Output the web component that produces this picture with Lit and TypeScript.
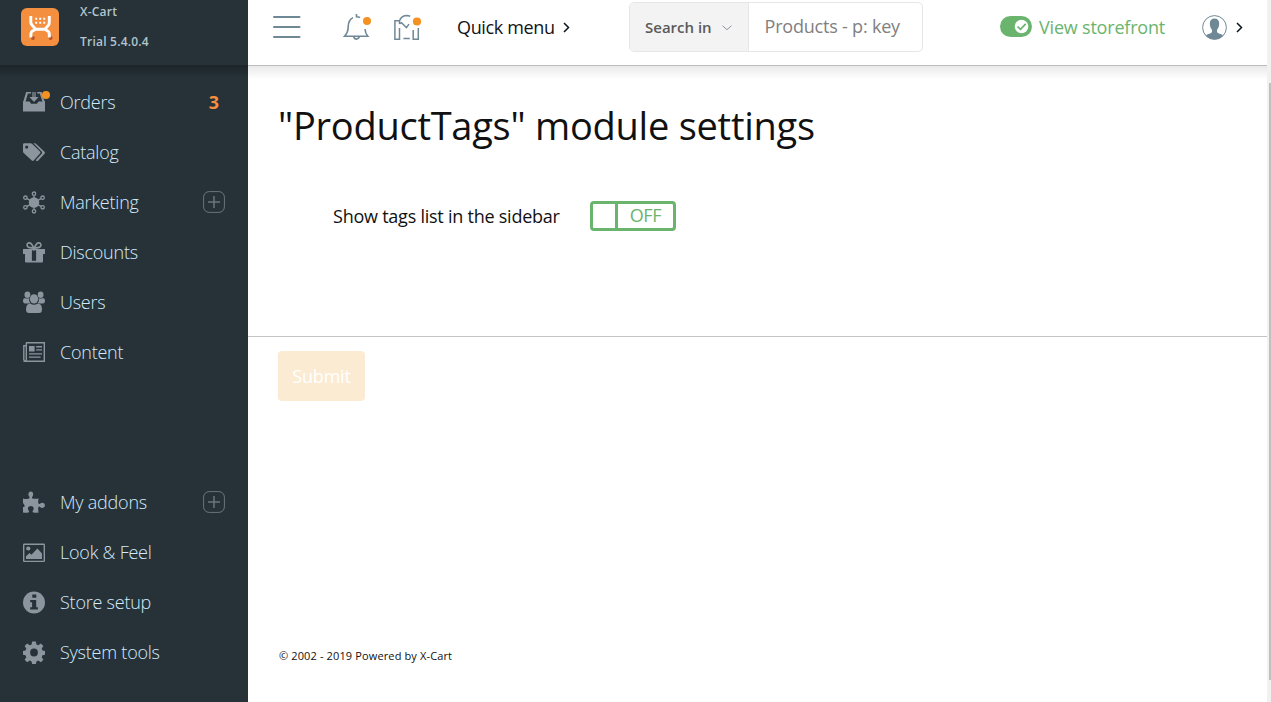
import { LitElement, html, css, svg } from "lit";
import { customElement } from "lit/decorators.js";

const icons: Record<string, unknown> = {
  orders: svg`<path d="M0 10.500h6.500l1.600 2.200h5.800l1.600-2.200H22V20.500H0Z"/><path d="M0 11.500 3.200 1H8v1.600H4.900L2.300 11.500ZM14.200 1h4.400L22 11.500h-2.300L16.700 2.600h-2.500Z"/><path d="M9.400 1h1.200v5.500H9.400Zm2 0h1.200v5.500h-1.200ZM6.400 6h9.200L11 10.900Z"/>`,
  catalog: svg`<path fill-rule="evenodd" d="M0 3.600Q0 2.300 1.300 2.300H7.600q1 0 1.700.7l7.700 7.600q1 1 0 2l-6.300 7q-.9.9-1.900 0L.7 12Q0 11.300 0 10.300ZM3.700 4.500a1.600 1.600 0 1 0 0 3.200 1.600 1.600 0 0 0 0-3.200Z"/><path d="M10.400 2.300h1.400q.8 0 1.400.6l8.300 7.900q.9.900 0 1.900l-6.500 7.100q-.9.800-1.700 0l-.6-.6 6-6.500q.9-1.100-.1-2.100Z"/>`,
  marketing: svg`<circle cx="11" cy="11.500" r="5.200"/><g fill="none" stroke="currentColor" stroke-width="1.300"><circle cx="11" cy="2.700" r="1.700"/><circle cx="11" cy="20.300" r="1.700"/><circle cx="2.400" cy="6.700" r="1.700"/><circle cx="19.600" cy="6.700" r="1.700"/><circle cx="2.400" cy="16.300" r="1.700"/><circle cx="19.600" cy="16.300" r="1.700"/><path d="M11 4.500v14M4 7.600l14 7.800M18 7.600 4 15.400"/></g>`,
  discounts: svg`<path d="M0 8h22v5h-2v7.500q0 1-1 1H3q-1 0-1-1V13H0Z"/><path d="M8.900 9.200h4.200v10.600H8.900Z" fill="#263238"/><path d="M9.900 8h2.200v1.500H9.900Z"/><path d="M10.700 7.200C9 2.600 7.500 1.900 6.300 1.900 3.200 1.900 3.300 6 6.700 6.600q2 .4 4 .6Zm.6 0C13 2.600 14.500 1.900 15.700 1.900 18.800 1.900 18.700 6 15.300 6.600q-2 .4-4 .6Z" fill="none" stroke="currentColor" stroke-width="1.600"/>`,
  users: svg`<ellipse cx="4.400" cy="3.700" rx="2.900" ry="3.200"/><ellipse cx="17.600" cy="3.700" rx="2.900" ry="3.200"/><path d="M0 9.600q0-2.500 2-2.500 2.300 1 4.300 0-.9 3.300 1.200 5.400H2.100Q0 12.500 0 9.600Zm22 0q0-2.500-2-2.500-2.300 1-4.300 0 .9 3.300-1.200 5.400h5.400q2.100 0 2.100-2.900Z"/><ellipse cx="11" cy="7.900" rx="4.100" ry="4.700"/><path d="M3 18.500q0-5.500 3.500-5.800h1q3.500 2 7 0h1q3.500.3 3.500 5.800 0 3.500-3 3.500H6q-3 0-3-3.500Z"/>`,
  content: svg`<path fill="none" stroke="currentColor" stroke-width="1.400" d="M3 4.700H.8V18.600q0 1.600 1.700 1.600M3 1.700h18.300v18.500H2.300q1-.6 1-2V1.700"/><path d="M6 5h5.600v5.600H6Zm7.200 0H19v1.400h-5.800Zm0 3.200H19v1.400h-5.800ZM6 12.200h13v1.200H6Zm0 3.200h11.500v1.300H6Z"/>`,
  addons: svg`<path d="M0 7.500Q3 8.600 6 7.500q1-.5.300-1.700Q5.300 4.500 5.400 2.800 5.700.5 7.800.5t2.400 2.300q.1 1.700-.9 3-.7 1.200.3 1.700 2.700.6 6 0-.6 2.800-.3 4.600.6 1.400 1.700.6 1.200-1.100 2.500-1 2.500.3 2.500 2.600t-2.500 2.600q-1.300.1-2.500-1-1.200-.8-1.700.6-.3 2.200.3 5-3 .4-5.300.1-1.200-.4-.5-1.900 1.100-1.400.8-2.900-.5-1.800-2.800-1.800T5 16.800q-.3 1.500.8 2.900.7 1.500-.5 1.800-2.600.4-5.300 0v-5.500q1.600.4 1.600-1.100T0 12Z"/>`,
  look: svg`<path fill="none" stroke="currentColor" stroke-width="1.400" d="M1.300 3.300h19.400q.6 0 .6.700v15.700q0 .7-.6.700H1.300q-.6 0-.6-.7V4q0-.7.6-.7Z"/><circle cx="5.300" cy="7.500" r="2.100"/><path d="M3 17.900v-2.600l3.500-3.400 1.900 1.800 6-6.200 4.600 5v5.400Z"/>`,
  setup: svg`<circle cx="11" cy="11.500" r="11"/><path fill="#263238" d="M9.300 3.600h4v3.100h-4ZM7.200 9h6v7.200h1.700v2.300H7.200v-2.300h1.900v-4.900H7.200Z"/>`,
  system: svg`<path fill-rule="evenodd" d="M9.100.5h3.800l.5 2.900 1.900.8 2.500-1.700 2.600 2.600-1.700 2.500.8 1.900 2.500.5v3.800l-2.500.5-.8 1.900 1.700 2.500-2.600 2.600-2.500-1.700-1.900.8-.5 2.600H9.100l-.5-2.600-1.900-.8-2.500 1.700-2.600-2.600 1.700-2.500-.8-1.900L0 13.800V10l2.500-.5.800-1.900-1.700-2.500 2.600-2.600 2.500 1.700 1.900-.8ZM11 7.600a3.900 3.900 0 1 0 0 7.800 3.900 3.900 0 0 0 0-7.800Z"/>`,
};

interface Item { icon: string; label: string; plus?: boolean; count?: string }

const upper: Item[] = [
  { icon: "orders", label: "Orders", count: "3" },
  { icon: "catalog", label: "Catalog" },
  { icon: "marketing", label: "Marketing", plus: true },
  { icon: "discounts", label: "Discounts" },
  { icon: "users", label: "Users" },
  { icon: "content", label: "Content" },
];
const lower: Item[] = [
  { icon: "addons", label: "My addons", plus: true },
  { icon: "look", label: "Look & Feel" },
  { icon: "setup", label: "Store setup" },
  { icon: "system", label: "System tools" },
];

@customElement("app-sidebar")
class AppSidebar extends LitElement {
  static styles = css`
    :host { display: flex; flex-direction: column; width: 248px; height: 702px; background: #263238; flex: none; }
    .brand { display: flex; height: 65px; box-sizing: border-box; padding: 8px 0 0 21px; gap: 21px; flex: none; }
    .logo { width: 38px; height: 38px; flex: none; }
    .names { font-size: 12px; font-weight: 600; line-height: 30px; color: #b3c5cd; margin-top: -11px; letter-spacing: .22px; }
    .menu { display: flex; flex-direction: column; flex: 1; padding-top: 12px; background: linear-gradient(#1b2429, #263238 12px); }
    .item { display: flex; align-items: center; height: 50px; padding: 0 23px; color: #8c949d; }
    .icon { position: relative; display: flex; width: 22px; height: 23px; margin-right: 15px; }
    .icon svg { width: 22px; height: 23px; fill: currentColor; }
    .dot { position: absolute; left: 19px; top: 0; width: 8px; height: 8px; border-radius: 50%; background: #f39121; }
    .label { flex: 1; font-size: 18px; font-weight: 300; line-height: 24px; letter-spacing: -.23px; color: #d3ebfc; white-space: nowrap; }
    .count { font-size: 18px; font-weight: 700; color: #f98f3c; margin-right: 6px; }
    .plus { width: 22px; height: 22px; fill: none; stroke: #69757c; }
    .gap { height: 100px; }
  `;
  row(i: Item) {
    return html`<div class="item">
      <span class="icon"><svg viewBox="0 0 22 23">${icons[i.icon]}</svg>${i.count ? html`<span class="dot"></span>` : ""}</span>
      <span class="label">${i.label}</span>
      ${i.count ? html`<span class="count">${i.count}</span>` : ""}
      ${i.plus ? html`<svg class="plus" viewBox="0 0 22 22"><rect x=".6" y=".6" width="20.800" height="20.800" rx="5.500"/><path stroke-width="1.500" d="M5 11h12M11 5v12"/></svg>` : ""}
    </div>`;
  }
  render() {
    return html`
      <div class="brand">
        <svg class="logo" viewBox="0 0 38 38">
          <rect width="38" height="38" rx="6" fill="#f48f40"/>
          <circle cx="11.900" cy="30" r="1.900" fill="#b7532c"/><circle cx="29.600" cy="30" r="1.900" fill="#b7532c"/>
          <path d="M9.800 8v6.500q.2 2 2 3.500l3 3.300h9l3-3.300q1.500-1.500 1.500-3.500V8M9.900 29.500v-3.300q0-2.400 2-3.400l2.900-1.500M28.300 29.500v-3.300q0-2.400-2-3.400l-2.500-1.500" fill="none" stroke="#fff" stroke-width="2.900"/>
          <path d="M14.200 9.700h2v2h-2Zm4 0h2v2h-2Zm4 0h2v2h-2Zm-8 4h2v2h-2Zm4 0h2v2h-2Zm4 0h2v2h-2Z" fill="#fff"/>
        </svg>
        <div class="names"><div>X-Cart</div><div>Trial 5.4.0.4</div></div>
      </div>
      <nav class="menu">${upper.map((i) => this.row(i))}<div class="gap"></div>${lower.map((i) => this.row(i))}</nav>`;
  }
}

@customElement("app-header")
class AppHeader extends LitElement {
  static styles = css`
    :host { display: flex; height: 66px; box-sizing: border-box; border-bottom: 1px solid #bdbdbd; color: #0f1419; flex: none; }
    svg { display: block; flex: none; fill: none; stroke: #6f8896; }
    .burger { width: 28px; height: 24px; margin: 15px 42px 0 25px; }
    .bell { width: 28px; height: 28px; margin: 14px 23px 0 0; }
    .news { width: 28px; height: 28px; margin: 14px 35px 0 0; }
    .dot { fill: #f39121; stroke: none; }
    .quick { font-size: 18px; line-height: 24px; margin-top: 15px; width: 98px; letter-spacing: -.35px; white-space: nowrap; }
    .arrow { width: 7px; height: 11px; stroke: #0f1419; stroke-width: 1.500; margin: 22px 0 0 8px; }
    .search { display: flex; box-sizing: border-box; width: 294px; height: 50px; margin: 2px 0 0 59px; border: 1px solid #e6e6e6; border-radius: 5px; overflow: hidden; }
    .scope { display: flex; align-items: center; box-sizing: border-box; width: 119px; padding-left: 15px; background: #f3f3f3; border-right: 1px solid #e6e6e6; font-size: 15px; font-weight: 600; color: #5a5a5a; white-space: nowrap; }
    .scope svg { width: 10px; height: 6px; margin: 2px 0 0 10px; stroke: #92929f; }
    .term { padding: 11px 0 0 15.5px; font-size: 18px; line-height: 24px; letter-spacing: -.2px; color: #808080; white-space: nowrap; }
    .toggle { width: 32px; height: 21px; margin: 16px 7px 0 77px; stroke: none; }
    .view { font-size: 18px; line-height: 24px; margin-top: 15px; width: 127px; letter-spacing: -.2px; color: #6ab46e; white-space: nowrap; }
    .user { width: 26px; height: 26px; margin: 14px 0 0 36px; }
  `;
  arrow() {
    return html`<svg class="arrow" viewBox="0 0 7 11"><path d="m1 1 4.500 4.500L1 10"/></svg>`;
  }
  render() {
    return html`
      <svg class="burger" viewBox="0 0 28 24" stroke-width="2" stroke-linecap="round"><path d="M1 2h25.500M1 12h25.500M1 22h25.500"/></svg>
      <svg class="bell" viewBox="0 0 28 28" stroke-width="1.600"><path d="M13.500 0v2.800q2.500.2 3.500.9M10 3.600Q5.400 6 5.200 12.500q0 6-3.700 9.800h23.300Q22.300 19.500 22 15M10.500 23q2.800 4.300 6 0"/><circle class="dot" cx="24" cy="7" r="4"/></svg>
      <svg class="news" viewBox="0 0 28 28" stroke-width="1.500"><path d="M5.500 14v11.300H.9V6.700h4.600M5.500 9.900l2-1.200 4.900 5 2.600-3.600M9.400 24.500h6.400M19.200 16v9.200h5.100V14M16.200 2.300Q14.500 1.500 12.300 1.500 7 2 5.500 7v3"/><circle class="dot" cx="23" cy="7.500" r="4.100"/></svg>
      <span class="quick">Quick menu</span>${this.arrow()}
      <div class="search"><div class="scope">Search in<svg viewBox="0 0 10 6"><path d="m.5.7 4.500 4 4.500-4"/></svg></div><div class="term">Products - p: key</div></div>
      <svg class="toggle" viewBox="0 0 32 21"><rect width="32" height="21" rx="10.500" fill="#6ab46e"/><circle cx="21.500" cy="10.500" r="6.800" fill="#fff"/><path d="m17.500 10.500 3 2.800 5.200-5.500" fill="none" stroke="#6ab46e" stroke-width="1.700"/></svg>
      <span class="view">View storefront</span>
      <svg class="user" viewBox="0 0 26 26"><circle cx="12.500" cy="13.500" r="11.900" fill="#fff"/><path stroke="none" fill="#6f8896" d="M12.500 4.500Q17.200 4.500 17.200 10q0 3.600-2.200 6v2q.8 1.500 5.500 2.700v1.700q-3.200 2.800-8 2.800t-8-2.800v-1.700q4.700-1.200 5.500-2.700v-2Q7.800 13.600 7.800 10 7.800 4.500 12.500 4.500Z"/></svg>
      ${this.arrow()}`;
  }
}

@customElement("app-root")
class AppRoot extends LitElement {
  static styles = css`
    :host { display: flex; width: 1271px; height: 702px; overflow: hidden; background: #fff; font-family: "Open Sans", sans-serif; color: #111; }
    .page { display: flex; flex-direction: column; width: 1019px; }
    .body { flex: 1; display: flex; flex-direction: column; background: linear-gradient(#e9e9e9, #fff 13px); }
    h1 { margin: 32px 0 0 30px; font-size: 38px; line-height: 54px; letter-spacing: -.25px; font-weight: 400; white-space: nowrap; }
    .setting { display: flex; margin: 49px 0 0 85px; height: 30px; }
    .name { width: 257px; font-size: 18px; line-height: 30px; letter-spacing: -.24px; white-space: nowrap; }
    .switch { display: flex; box-sizing: border-box; width: 86px; height: 30px; border: 3px solid #6ab46e; border-radius: 4px; }
    .knob { width: 22px; border-right: 3px solid #6ab46e; }
    .state { flex: 1; text-align: center; font-size: 18px; line-height: 22px; letter-spacing: -.3px; color: #6ab46e; }
    .actions { margin-top: 105px; padding: 14px 30px 0; border-top: 1px solid #c4c4c4; }
    .submit { display: block; width: 87px; height: 50px; padding: 0; border: 0; border-radius: 4px; background: #fcebd3; color: #fff; font: 400 18px "Open Sans", sans-serif; letter-spacing: -.2px; }
    .footer { margin: 246px 0 0 31px; font-size: 11px; line-height: 18px; letter-spacing: .13px; white-space: nowrap; }
    .track { flex: 1; box-sizing: border-box; background: #f1f1f1; padding: 83px 0 0 2px; }
    .thumb { height: 597px; background: #c1c1c1; }
  `;
  render() {
    return html`
      <app-sidebar></app-sidebar>
      <div class="page">
        <app-header></app-header>
        <main class="body">
          <h1>"ProductTags" module settings</h1>
          <div class="setting"><span class="name">Show tags list in the sidebar</span><div class="switch"><div class="knob"></div><div class="state">OFF</div></div></div>
          <div class="actions"><button class="submit">Submit</button></div>
          <div class="footer">© 2002 - 2019 Powered by X-Cart</div>
        </main>
      </div>
      <div class="track"><div class="thumb"></div></div>`;
  }
}
